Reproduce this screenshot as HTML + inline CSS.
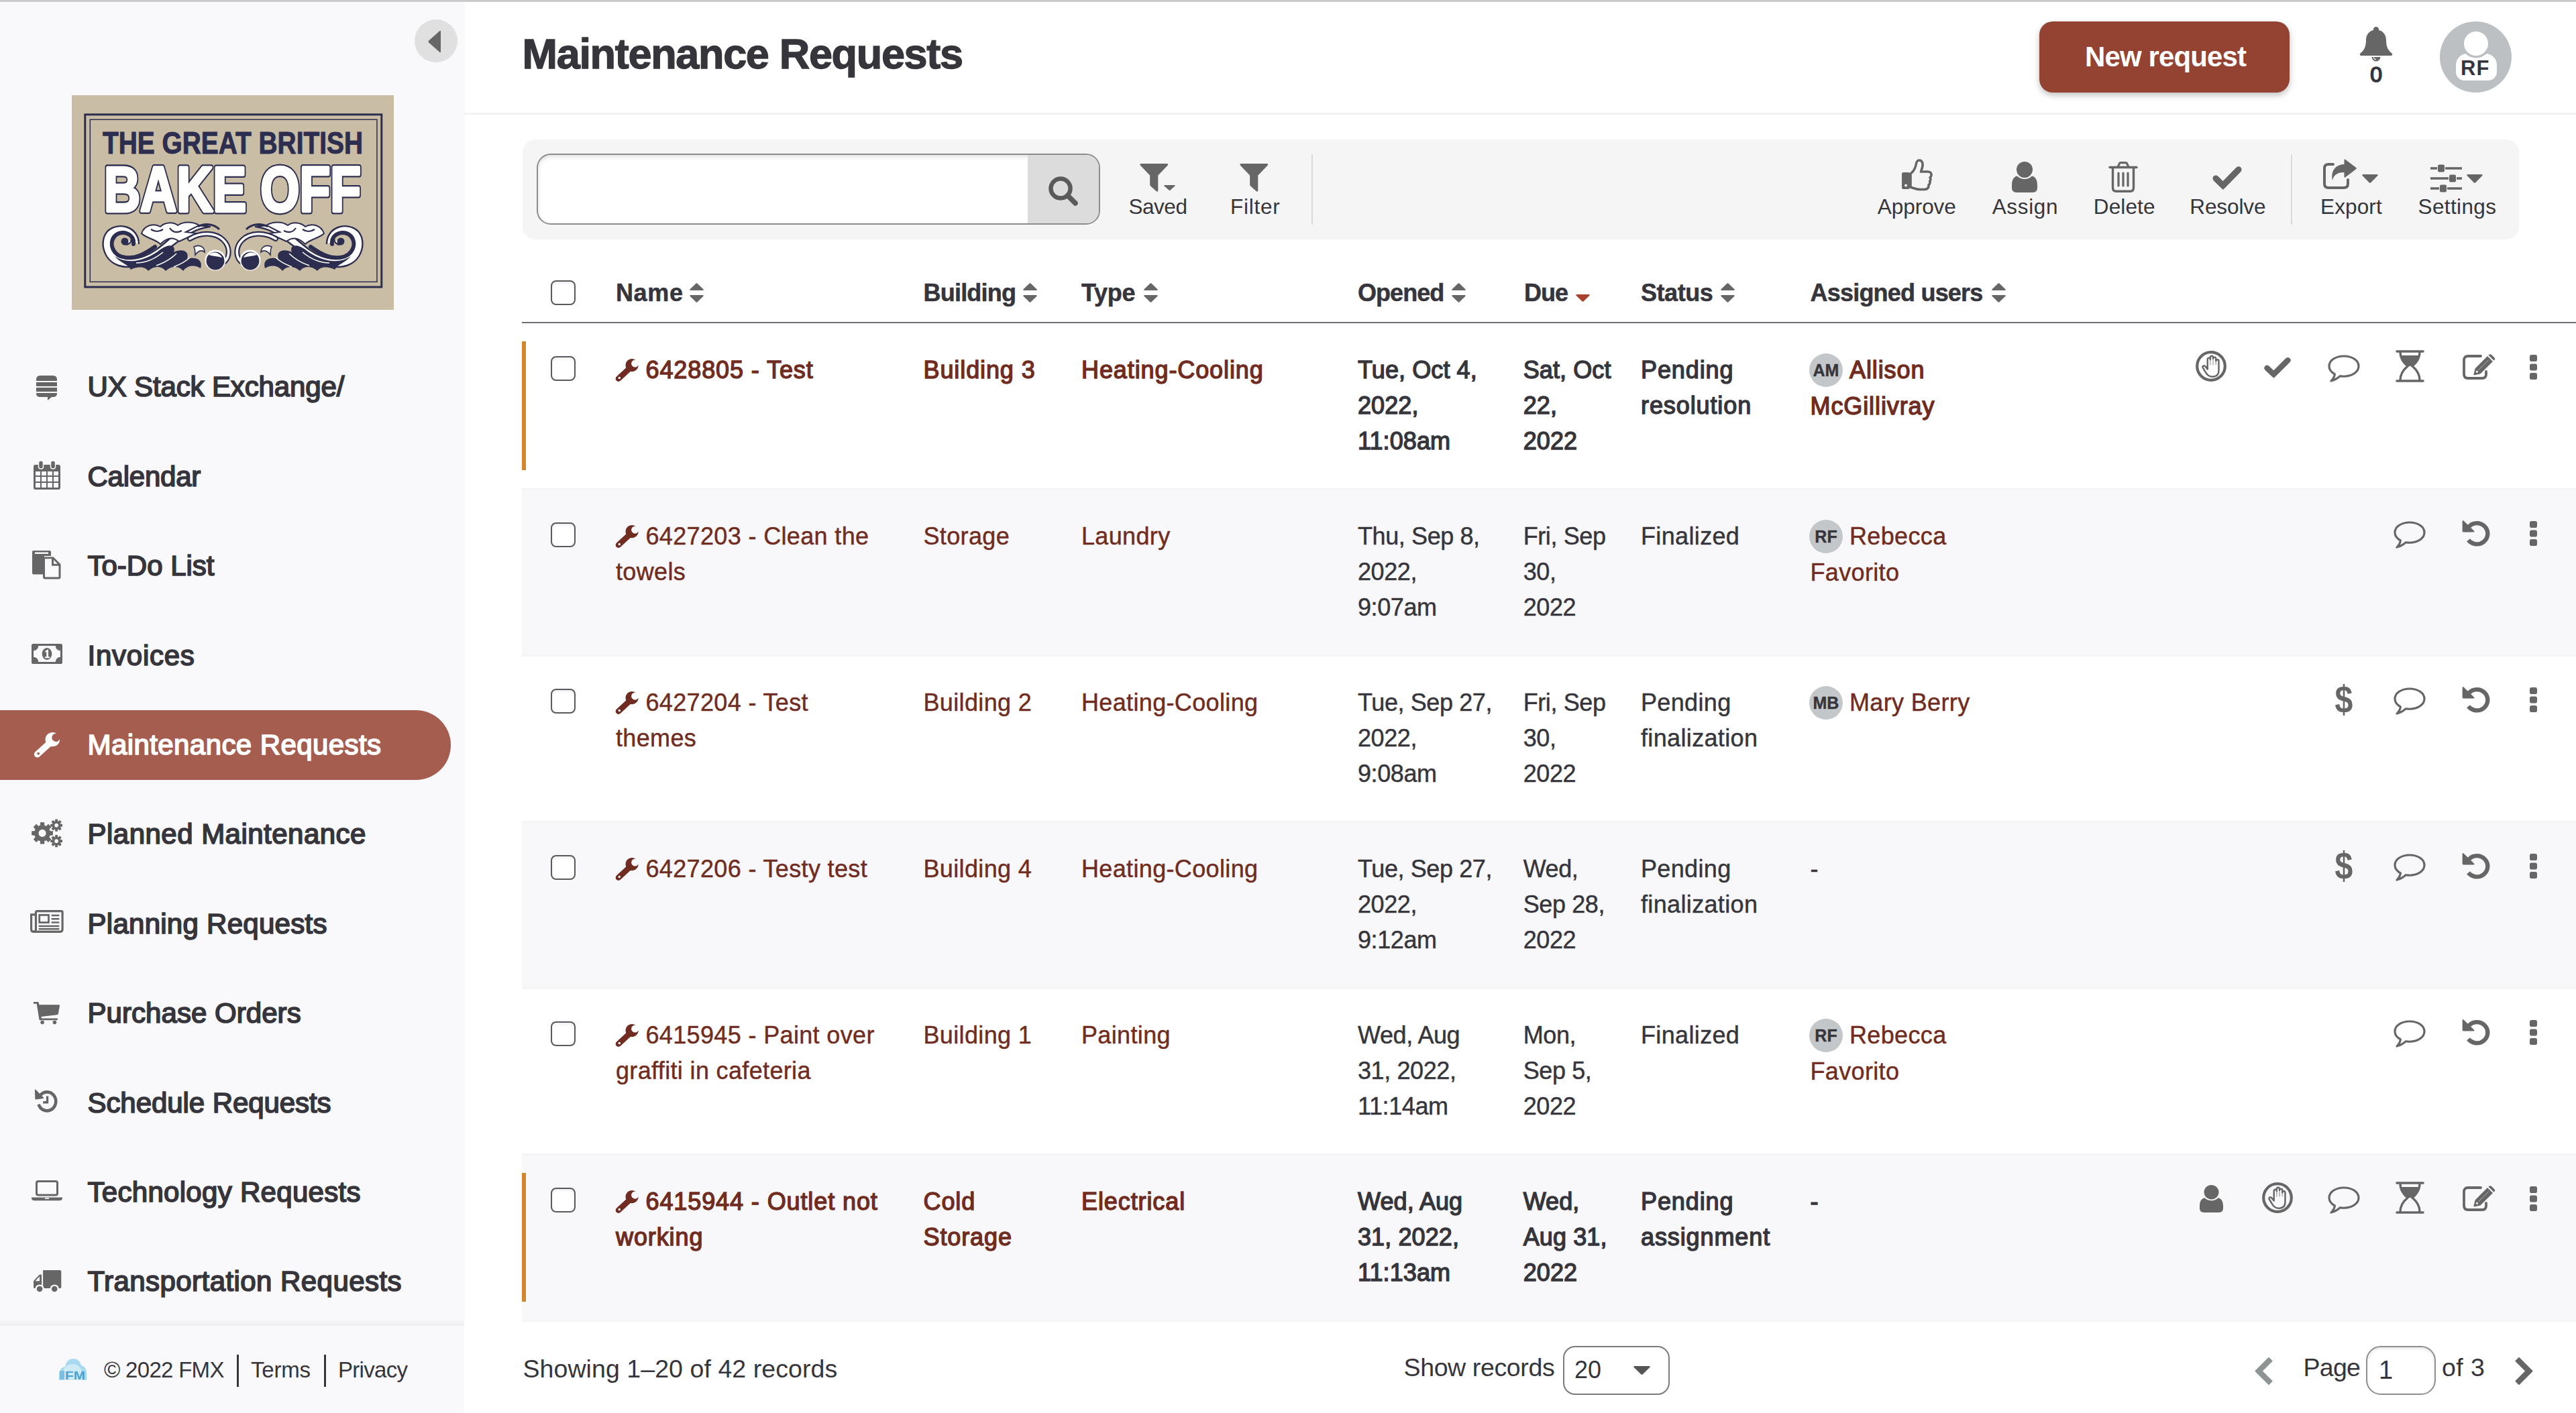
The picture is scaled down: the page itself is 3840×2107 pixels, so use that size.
<!DOCTYPE html>
<html lang="en"><head><meta charset="utf-8"><title>Maintenance Requests</title>
<style>
*{box-sizing:border-box;margin:0;padding:0}
html,body{width:3840px;height:2107px;overflow:hidden;background:#fff}
body{font-family:"Liberation Sans",sans-serif;color:#35353b;position:relative}
#app{position:absolute;left:0;top:0;width:3840px;height:2107px;overflow:hidden;transform-origin:0 0;background:#fff}
.abs,.ic,.t{position:absolute}
.ic{display:block;overflow:visible}
.t{white-space:nowrap;line-height:1}
.med{-webkit-text-stroke:0.9px currentColor}
#sidebar{position:absolute;left:0;top:0;width:693px;height:2107px;background:#f9f9fb}
.nav{font-size:42px;-webkit-text-stroke:1.7px currentColor}
.th{font-size:38px;font-weight:700;letter-spacing:-1.4px}
.cell{position:absolute;font-size:36px;line-height:53px;white-space:nowrap;letter-spacing:0.35px;-webkit-text-stroke:0.45px currentColor}
.dt{letter-spacing:-0.4px}
.link{color:#702c20}
.un{-webkit-text-stroke:1.4px currentColor;letter-spacing:0.9px}
.un.dt{letter-spacing:0.1px}
.tb{font-size:33px;letter-spacing:-0.5px}
.row{position:absolute;left:778px;width:3062px;height:248px}
.alt{background:#f8f8fa}
.bar{position:absolute;left:0;top:29px;width:6px;height:192px;background:#d4862b}
.cb{position:absolute;width:37px;height:37px;border:2.5px solid #5a5a5e;border-radius:8px;background:#fff;box-shadow:inset 0 2px 4px rgba(0,0,0,.08)}
.av{display:inline-block;width:50px;height:50px;border-radius:50%;background:#c4c7ca;color:#35353b;font-size:25px;font-weight:700;text-align:center;line-height:50px;vertical-align:middle;margin-right:10px;margin-left:-1.5px;position:relative;top:-2px;letter-spacing:0;-webkit-text-stroke:0.4px currentColor}
</style></head>
<body>
<div id="app">
<div class="abs" style="left:0;top:0;width:3840px;height:2.5px;background:linear-gradient(#c4c4c4,#d4d4d4);z-index:50"></div>
<div id="sidebar">
<div class="abs" style="left:618px;top:29px;width:64px;height:64px;border-radius:50%;background:#e0e0e1"></div>
<svg class="ic" style="left:638.0px;top:44.5px;width:20.0px;height:34.0px;color:#666;" viewBox="0 0 20 34" preserveAspectRatio="none"><path d="M19 2 L19 32 Q19 34 17 32.6 L1 18.2 Q0 17 1 15.8 L17 1.4 Q19 0 19 2Z" fill="currentColor"/></svg>
<svg class="ic" style="left:106.5px;top:141.5px;width:480px;height:320px" viewBox="0 0 480 320">
<rect width="480" height="320" fill="#c9bda5"/>
<rect x="19.8" y="28.8" width="442" height="257.2" fill="none" stroke="#2d2e4f" stroke-width="3"/>
<rect x="27.3" y="36.3" width="427.6" height="242" fill="none" stroke="#2d2e4f" stroke-width="1.5"/>
<text x="46" y="87" font-family="Liberation Sans, sans-serif" font-weight="700" font-size="45.5" fill="#2d2e4f" stroke="#2d2e4f" stroke-width="1" textLength="388" lengthAdjust="spacingAndGlyphs">THE GREAT BRITISH</text>
<text x="48" y="173" font-family="Liberation Sans, sans-serif" font-weight="700" font-size="95" fill="#2d2e4f" stroke="#2d2e4f" stroke-width="9" stroke-linejoin="round" textLength="383" lengthAdjust="spacingAndGlyphs">BAKE OFF</text>
<text x="48" y="173" font-family="Liberation Sans, sans-serif" font-weight="700" font-size="95" fill="#fff" stroke="#fff" stroke-width="4.4" stroke-linejoin="round" textLength="383" lengthAdjust="spacingAndGlyphs">BAKE OFF</text>
<g><path d="M100 222 C100 196 70 188 54 202 C40 216 46 246 70 254 C96 262 120 246 140 232 C160 218 176 200 206 196 C190 192 170 196 156 206 C140 218 128 232 108 240 C88 248 66 244 60 226 C56 212 66 202 78 204 C90 206 92 218 84 222 C78 224 74 218 78 214" fill="#fff" stroke="#2d2e4f" stroke-width="2.4" stroke-linejoin="round"/><path d="M92 222 C94 206 74 200 64 210 C54 222 62 240 80 242 C96 244 110 236 124 226" fill="none" stroke="#2d2e4f" stroke-width="6" stroke-linecap="round"/><circle cx="79" cy="218" r="5.5" fill="#2d2e4f"/><path d="M104 206 C108 194 122 190 132 196 C138 190 150 188 158 194 C166 188 180 188 190 194 L170 204 L186 206 L160 218 C150 210 140 214 132 222 C124 214 112 214 104 206Z" fill="#fff" stroke="#2d2e4f" stroke-width="2"/><path d="M118 200 C124 204 130 204 136 200 M146 198 C150 204 156 206 164 202" fill="none" stroke="#2d2e4f" stroke-width="2.2"/><path d="M64 240 C84 254 112 246 132 230 C146 220 156 224 152 234 C164 228 176 232 172 244 C186 240 196 246 192 258 C182 252 172 254 166 262 C160 254 148 254 140 262 C134 254 122 254 114 262 C108 254 96 256 88 260 C84 252 72 250 64 240Z" fill="#2d2e4f"/><path d="M96 250 C110 250 124 244 136 234 M126 254 C138 250 148 244 156 236 M152 256 C162 252 170 248 176 242" fill="none" stroke="#fff" stroke-width="1.6"/><path d="M176 214 C192 204 214 204 226 216 C236 226 236 240 228 248" fill="none" stroke="#2d2e4f" stroke-width="8" stroke-linecap="round"/><path d="M176 214 C192 204 214 204 226 216 C236 226 236 240 228 248" fill="none" stroke="#fff" stroke-width="3.6" stroke-linecap="round"/><circle cx="214" cy="246" r="15.5" fill="#fff"/><circle cx="214" cy="247" r="13.5" fill="#2d2e4f"/><path d="M204 238 C210 232 220 234 224 242 C216 240 210 240 204 238Z" fill="#fff"/><path d="M182 226 C190 222 198 226 198 234 C194 230 188 232 184 238 C184 232 184 230 182 226Z" fill="#fff" stroke="#2d2e4f" stroke-width="1.6"/><path d="M188 196 C198 190 212 192 220 200" fill="none" stroke="#2d2e4f" stroke-width="3"/></g>
<g transform="translate(480,0) scale(-1,1)"><path d="M100 222 C100 196 70 188 54 202 C40 216 46 246 70 254 C96 262 120 246 140 232 C160 218 176 200 206 196 C190 192 170 196 156 206 C140 218 128 232 108 240 C88 248 66 244 60 226 C56 212 66 202 78 204 C90 206 92 218 84 222 C78 224 74 218 78 214" fill="#fff" stroke="#2d2e4f" stroke-width="2.4" stroke-linejoin="round"/><path d="M92 222 C94 206 74 200 64 210 C54 222 62 240 80 242 C96 244 110 236 124 226" fill="none" stroke="#2d2e4f" stroke-width="6" stroke-linecap="round"/><circle cx="79" cy="218" r="5.5" fill="#2d2e4f"/><path d="M104 206 C108 194 122 190 132 196 C138 190 150 188 158 194 C166 188 180 188 190 194 L170 204 L186 206 L160 218 C150 210 140 214 132 222 C124 214 112 214 104 206Z" fill="#fff" stroke="#2d2e4f" stroke-width="2"/><path d="M118 200 C124 204 130 204 136 200 M146 198 C150 204 156 206 164 202" fill="none" stroke="#2d2e4f" stroke-width="2.2"/><path d="M64 240 C84 254 112 246 132 230 C146 220 156 224 152 234 C164 228 176 232 172 244 C186 240 196 246 192 258 C182 252 172 254 166 262 C160 254 148 254 140 262 C134 254 122 254 114 262 C108 254 96 256 88 260 C84 252 72 250 64 240Z" fill="#2d2e4f"/><path d="M96 250 C110 250 124 244 136 234 M126 254 C138 250 148 244 156 236 M152 256 C162 252 170 248 176 242" fill="none" stroke="#fff" stroke-width="1.6"/><path d="M176 214 C192 204 214 204 226 216 C236 226 236 240 228 248" fill="none" stroke="#2d2e4f" stroke-width="8" stroke-linecap="round"/><path d="M176 214 C192 204 214 204 226 216 C236 226 236 240 228 248" fill="none" stroke="#fff" stroke-width="3.6" stroke-linecap="round"/><circle cx="214" cy="246" r="15.5" fill="#fff"/><circle cx="214" cy="247" r="13.5" fill="#2d2e4f"/><path d="M204 238 C210 232 220 234 224 242 C216 240 210 240 204 238Z" fill="#fff"/><path d="M182 226 C190 222 198 226 198 234 C194 230 188 232 184 238 C184 232 184 230 182 226Z" fill="#fff" stroke="#2d2e4f" stroke-width="1.6"/><path d="M188 196 C198 190 212 192 220 200" fill="none" stroke="#2d2e4f" stroke-width="3"/></g>
</svg>
<svg class="ic" style="left:54.0px;top:559.5px;width:31.0px;height:37.0px;color:#666;" viewBox="0 0 31 37" preserveAspectRatio="none"><path d="M0 8 V6 Q0 0 6 0 H25 Q31 0 31 6 V8Z" fill="currentColor"/>
<rect x="0" y="10" width="31" height="6" fill="currentColor"/>
<rect x="0" y="18" width="31" height="6" fill="currentColor"/>
<path d="M0 26 H31 V27 Q31 32 25 32 H23 L17 37 V32 H6 Q0 32 0 27Z" fill="currentColor"/></svg>
<div class="t nav" style="left:130.5px;top:556.4px;font-size:42px;color:#35353b;letter-spacing:-0.14px;">UX Stack Exchange/</div>
<svg class="ic" style="left:49.7px;top:687.3px;width:40.0px;height:43.0px;color:#666;" viewBox="0 0 40 43" preserveAspectRatio="none"><path d="M3 6 H37 Q40 6 40 9 V40 Q40 43 37 43 H3 Q0 43 0 40 V9 Q0 6 3 6Z" fill="currentColor"/>
<g fill="#f9f9fb">
<rect x="3" y="16" width="7" height="6"/><rect x="12" y="16" width="7" height="6"/><rect x="21" y="16" width="7" height="6"/><rect x="30" y="16" width="7" height="6"/>
<rect x="3" y="24" width="7" height="7"/><rect x="12" y="24" width="7" height="7"/><rect x="21" y="24" width="7" height="7"/><rect x="30" y="24" width="7" height="7"/>
<rect x="3" y="33" width="7" height="7"/><rect x="12" y="33" width="7" height="7"/><rect x="21" y="33" width="7" height="7"/><rect x="30" y="33" width="7" height="7"/>
</g>
<rect x="7.5" y="0" width="7" height="12" rx="3" fill="currentColor" stroke="#f9f9fb" stroke-width="1.5"/>
<rect x="25.5" y="0" width="7" height="12" rx="3" fill="currentColor" stroke="#f9f9fb" stroke-width="1.5"/></svg>
<div class="t nav" style="left:130.5px;top:689.8px;font-size:42px;color:#35353b;letter-spacing:-0.24px;">Calendar</div>
<svg class="ic" style="left:48.2px;top:820.5px;width:43.0px;height:42.5px;color:#666;" viewBox="0 0 43 43" preserveAspectRatio="none"><path d="M2 0 H26 Q28 0 28 2 V8 H18 V36 H2 Q0 36 0 34 V2 Q0 0 2 0Z" fill="currentColor"/>
<rect x="4" y="2.5" width="20" height="2.5" fill="#f9f9fb"/>
<path d="M19 11 H31 L41 21 V40 Q41 41.5 39.5 41.5 H19 Q17.5 41.5 17.5 40 V12.5 Q17.5 11 19 11Z" fill="#f9f9fb" stroke="currentColor" stroke-width="3"/>
<path d="M30.5 11.5 V21.5 H40.5" fill="none" stroke="currentColor" stroke-width="3"/></svg>
<div class="t nav" style="left:130.5px;top:823.2px;font-size:42px;color:#35353b;letter-spacing:-0.01px;">To-Do List</div>
<svg class="ic" style="left:46.8px;top:960.2px;width:46.0px;height:30.0px;color:#666;" viewBox="0 0 45 29" preserveAspectRatio="none"><rect x="1.5" y="1.5" width="42" height="26" rx="1" fill="none" stroke="currentColor" stroke-width="3"/>
<path d="M3 3 H10 A7 7 0 0 1 3 10Z M42 3 V10 A7 7 0 0 1 35 3Z M3 26 V19 A7 7 0 0 1 10 26Z M42 26 H35 A7 7 0 0 1 42 19Z" fill="currentColor"/>
<ellipse cx="22.5" cy="14.5" rx="7.2" ry="8.6" fill="currentColor"/>
<path d="M20 10.5 L23 8.5 H24.5 V18.5 H26.5 V20.5 H19.5 V18.5 H21.8 V11.6 L20 12.6Z" fill="#f9f9fb"/></svg>
<div class="t nav" style="left:130.5px;top:956.6px;font-size:42px;color:#35353b;letter-spacing:0.75px;">Invoices</div>
<div class="abs" style="left:-60px;top:1058.6px;width:732px;height:104px;border-radius:52px;background:#a55d50"></div>
<svg class="ic" style="left:50.3px;top:1091.6px;width:39.4px;height:38.0px;color:#fff;" viewBox="0 0 35 34.5" preserveAspectRatio="none"><path d="M30.6 1.7 A9.6 9.6 0 1 0 34.8 9.35 A5.5 5.5 0 1 1 30.6 1.7Z" fill="currentColor"/>
<path d="M2.08 26.64 L17.58 12.34 L23.42 18.66 L7.92 32.96 A4.3 4.3 0 0 1 2.08 26.64Z M8.1 28.7 A1.75 1.75 0 1 0 4.6 28.7 A1.75 1.75 0 1 0 8.1 28.7Z" fill="currentColor" fill-rule="evenodd"/></svg>
<div class="t nav" style="left:130.5px;top:1090.0px;font-size:42px;color:#fff;letter-spacing:0.42px;">Maintenance Requests</div>
<svg class="ic" style="left:46.7px;top:1222.0px;width:46.2px;height:40.8px;color:#666;" viewBox="0 0 46 40" preserveAspectRatio="none"><path d="M31.27 17.34 L31.27 22.66 L27.18 22.68 L25.81 26.01 L28.68 28.91 L24.91 32.68 L22.01 29.81 L18.68 31.18 L18.66 35.27 L13.34 35.27 L13.32 31.18 L9.99 29.81 L7.09 32.68 L3.32 28.91 L6.19 26.01 L4.82 22.68 L0.73 22.66 L0.73 17.34 L4.82 17.32 L6.19 13.99 L3.32 11.09 L7.09 7.32 L9.99 10.19 L13.32 8.82 L13.34 4.73 L18.66 4.73 L18.68 8.82 L22.01 10.19 L24.91 7.32 L28.68 11.09 L25.81 13.99 L27.18 17.32Z" fill="currentColor" stroke="currentColor" stroke-width="1" stroke-linejoin="round"/><circle cx="16" cy="20" r="5.5" fill="#f9f9fb"/><path d="M45.37 7.04 L45.37 9.96 L42.83 9.90 L42.12 11.63 L43.95 13.39 L41.89 15.45 L40.13 13.62 L38.40 14.33 L38.46 16.87 L35.54 16.87 L35.60 14.33 L33.87 13.62 L32.11 15.45 L30.05 13.39 L31.88 11.63 L31.17 9.90 L28.63 9.96 L28.63 7.04 L31.17 7.10 L31.88 5.37 L30.05 3.61 L32.11 1.55 L33.87 3.38 L35.60 2.67 L35.54 0.13 L38.46 0.13 L38.40 2.67 L40.13 3.38 L41.89 1.55 L43.95 3.61 L42.12 5.37 L42.83 7.10Z" fill="currentColor" stroke="currentColor" stroke-width="1" stroke-linejoin="round"/><circle cx="37" cy="8.5" r="2.8" fill="#f9f9fb"/><path d="M45.37 30.04 L45.37 32.96 L42.83 32.90 L42.12 34.63 L43.95 36.39 L41.89 38.45 L40.13 36.62 L38.40 37.33 L38.46 39.87 L35.54 39.87 L35.60 37.33 L33.87 36.62 L32.11 38.45 L30.05 36.39 L31.88 34.63 L31.17 32.90 L28.63 32.96 L28.63 30.04 L31.17 30.10 L31.88 28.37 L30.05 26.61 L32.11 24.55 L33.87 26.38 L35.60 25.67 L35.54 23.13 L38.46 23.13 L38.40 25.67 L40.13 26.38 L41.89 24.55 L43.95 26.61 L42.12 28.37 L42.83 30.10Z" fill="currentColor" stroke="currentColor" stroke-width="1" stroke-linejoin="round"/><circle cx="37" cy="31.5" r="2.8" fill="#f9f9fb"/></svg>
<div class="t nav" style="left:130.5px;top:1223.4px;font-size:42px;color:#35353b;letter-spacing:0.48px;">Planned Maintenance</div>
<svg class="ic" style="left:44.9px;top:1357.0px;width:49.7px;height:34.0px;color:#666;" viewBox="0 0 47 32" preserveAspectRatio="none"><path d="M8 1.5 H44 Q45.5 1.5 45.5 3 V27 Q45.5 30.5 42 30.5 H5 Q1.5 30.5 1.5 27 V6.5 H8" fill="none" stroke="currentColor" stroke-width="3"/>
<path d="M8 1.5 V27 Q8 30.5 5 30.5" fill="none" stroke="currentColor" stroke-width="3"/>
<rect x="13" y="7" width="13" height="10.5" fill="none" stroke="currentColor" stroke-width="2.6"/>
<path d="M30 7.5 H41 M30 12.5 H41 M30 17.5 H41 M12 22.5 H41 M12 26.5 H41" stroke="currentColor" stroke-width="2.4"/></svg>
<div class="t nav" style="left:130.5px;top:1356.8px;font-size:42px;color:#35353b;letter-spacing:0.27px;">Planning Requests</div>
<svg class="ic" style="left:50.3px;top:1493.5px;width:39.4px;height:33.4px;color:#666;" viewBox="0 0 42 36" preserveAspectRatio="none"><path d="M0 0 H6.5 Q8 0 8.4 1.6 L9 4.5 H40 Q42 4.5 41.6 6.5 L39.3 19 Q39 20.6 37.4 20.8 L12.2 23.6 L12.8 26.5 H37 Q38.5 26.5 38.5 28 Q38.5 29.5 37 29.5 H10.5 Q9.2 29.5 9 28.2 L5 3 H0Z" fill="currentColor"/>
<circle cx="14" cy="33" r="3" fill="currentColor"/><circle cx="33.5" cy="33" r="3" fill="currentColor"/></svg>
<div class="t nav" style="left:130.5px;top:1490.2px;font-size:42px;color:#35353b;letter-spacing:0.05px;">Purchase Orders</div>
<svg class="ic" style="left:51.1px;top:1624.2px;width:36.4px;height:36.7px;color:#666;" viewBox="0 0 40 38" preserveAspectRatio="none"><path d="M7.2 23.5 A14.5 14.5 0 1 0 10 9.5" fill="none" stroke="currentColor" stroke-width="5"/>
<path d="M1 2 L1.5 15 Q1.6 16.2 2.8 16 L15 14.5 Q16.5 14.2 15.4 13.1 L3 1.2 Q1 -0.5 1 2Z" fill="currentColor"/>
<path d="M21.5 11 V20.5 H14.5" fill="none" stroke="currentColor" stroke-width="3.6"/></svg>
<div class="t nav" style="left:130.5px;top:1623.6px;font-size:42px;color:#35353b;letter-spacing:-0.07px;">Schedule Requests</div>
<svg class="ic" style="left:47.0px;top:1760.3px;width:46.0px;height:30.7px;color:#666;" viewBox="0 0 46 30" preserveAspectRatio="none"><rect x="7.5" y="1.5" width="31" height="20" rx="2.5" fill="none" stroke="currentColor" stroke-width="3"/>
<path d="M0 25 H46 V26 Q46 29.5 42 29.5 H4 Q0 29.5 0 26Z" fill="currentColor"/>
<rect x="20" y="25.6" width="6" height="1.6" fill="#f9f9fb"/></svg>
<div class="t nav" style="left:130.5px;top:1757.0px;font-size:42px;color:#35353b;letter-spacing:0.30px;">Technology Requests</div>
<svg class="ic" style="left:49.8px;top:1893.5px;width:41.3px;height:33.4px;color:#666;" viewBox="0 0 41 34" preserveAspectRatio="none"><path d="M14 0 H39 Q41 0 41 2 V26 Q41 27.5 39.5 27.5 H14Z" fill="currentColor"/>
<path d="M12 6.5 V27.5 H1.5 Q0 27.5 0 26 V17.5 Q0 16.5 0.8 15.6 L8 7.6 Q9 6.5 10 6.5Z M3 16.5 H9 V9.6 H8.8 L3 16Z" fill="currentColor" fill-rule="evenodd"/>
<circle cx="9" cy="28.5" r="5.5" fill="currentColor" stroke="#f9f9fb" stroke-width="2.4"/>
<circle cx="31" cy="28.5" r="5.5" fill="currentColor" stroke="#f9f9fb" stroke-width="2.4"/></svg>
<div class="t nav" style="left:130.5px;top:1890.4px;font-size:42px;color:#35353b;letter-spacing:0.44px;">Transportation Requests</div>
<div class="abs" style="left:0;top:1966px;width:693px;height:11px;background:linear-gradient(rgba(0,0,0,0),rgba(0,0,0,.045))"></div>
<div class="abs" style="left:0;top:1977px;width:693px;height:130px;background:#f9f9fb"></div>
<svg class="ic" style="left:85.5px;top:2024.5px;width:44px;height:34px" viewBox="0 0 44 34">
<path d="M2 33 V24 C2 18 6 14 11 13 C12 6 17 1 23 1 C29 1 34 5 35 11 C40 12 43 17 43 22 V33Z" fill="#a9d9f0"/>
<path d="M8 33 V22 C8 15 14 9 22 9 C30 9 36 15 36 22 V33Z" fill="#cfeaf7"/>
<rect x="3" y="19" width="7" height="13" fill="#7cc0e6"/>
<text x="11" y="32" font-family="Liberation Sans, sans-serif" font-weight="700" font-size="17" fill="#4aa3d6" textLength="30" lengthAdjust="spacingAndGlyphs">FM</text>
</svg>
<div class="t " style="left:155px;top:2026.1px;font-size:33px;color:#35353b;letter-spacing:-0.7px;">© 2022 FMX</div>
<div class="abs" style="left:353px;top:2020px;width:3px;height:48px;background:#35353b"></div>
<div class="t " style="left:374px;top:2026.1px;font-size:33px;color:#35353b;letter-spacing:-0.2px;">Terms</div>
<div class="abs" style="left:483px;top:2020px;width:3px;height:48px;background:#35353b"></div>
<div class="t " style="left:504px;top:2026.1px;font-size:33px;color:#35353b;letter-spacing:-0.7px;">Privacy</div>
</div>
<div class="abs" style="left:692px;top:168px;width:3148px;height:2.5px;background:#f2f2f3"></div>
<div class="t " style="left:778.6px;top:48.7px;font-size:63px;color:#35353b;font-weight:700;letter-spacing:-1.33px;-webkit-text-stroke:1.3px currentColor;">Maintenance Requests</div>
<div class="abs" style="left:3040px;top:32px;width:373px;height:106px;border-radius:20px;background:#944332;box-shadow:0 4px 10px rgba(0,0,0,.25)"></div>
<div class="t " style="left:3108px;top:64.4px;font-size:42px;color:#fff;font-weight:700;letter-spacing:-0.88px;">New request</div>
<svg class="ic" style="left:3516.5px;top:39.5px;width:50.0px;height:52.0px;color:#666;" viewBox="0 0 50 52" preserveAspectRatio="none"><path d="M25 0 C27.4 0 29 1.6 29 3.6 V5 C36.5 6.8 40 13 40 20 C40 29 42.5 35 48.5 39.5 Q50 41 48.5 42.5 Q47.8 43 47 43 H3 Q2.2 43 1.5 42.5 Q0 41 1.5 39.5 C7.5 35 10 29 10 20 C10 13 13.5 6.8 21 5 V3.6 C21 1.6 22.6 0 25 0Z" fill="currentColor"/>
<path d="M18.5 45 A6.5 6.5 0 0 0 31.5 45Z" fill="currentColor"/>
<path d="M21.5 45.3 A3.6 3.6 0 0 0 25 48.7" fill="none" stroke="#fff" stroke-width="1.2"/></svg>
<div class="t " style="left:3533.3px;top:95.2px;font-size:32px;color:#35353b;-webkit-text-stroke:1.6px currentColor;">0</div>
<div class="abs" style="left:3637px;top:32px;width:107px;height:106px;border-radius:50%;background:#bcc0c3;overflow:hidden"><div class="abs" style="left:24px;top:48px;width:60.5px;height:40px;border-radius:17px 17px 13px 13px;background:#fff"></div><div class="abs" style="left:35.5px;top:14.5px;width:36.5px;height:36.5px;border-radius:50%;background:#fff;box-shadow:0 0 0 3.5px #bcc0c3"></div></div>
<div class="t " style="left:3668px;top:85.8px;font-size:31px;color:#35353b;font-weight:700;letter-spacing:1px;">RF</div>
<div class="abs" style="left:779px;top:208px;width:2976px;height:149px;border-radius:19px;background:#f5f5f5"></div>
<div class="abs" style="left:800px;top:229px;width:840px;height:106px;border-radius:21px;border:2.5px solid #8c8c8c;background:#fff;overflow:hidden;box-shadow:inset 0 3px 6px rgba(0,0,0,.12)"><div class="abs" style="left:730px;top:0;width:110px;height:106px;background:#dcdcdc"></div></div>
<svg class="ic" style="left:1563.0px;top:262.5px;width:44.0px;height:44.0px;color:#5a5a5a;" viewBox="0 0 44 44" preserveAspectRatio="none"><circle cx="18" cy="18" r="14.5" fill="none" stroke="currentColor" stroke-width="6.5"/>
<path d="M28.5 28.5 L40 40" stroke="currentColor" stroke-width="7.5" stroke-linecap="round"/></svg>
<svg class="ic" style="left:1699.0px;top:244.3px;width:42.5px;height:42.0px;color:#666;" viewBox="0 0 42 42" preserveAspectRatio="none"><path d="M2 0 H40 Q42.6 0.2 41 2.8 L27 17.5 V40 Q26.8 42.6 24.6 41.2 L16 33.4 Q15 32.6 15 31.4 V17.5 L1 2.8 Q-0.6 0.2 2 0Z" fill="currentColor"/></svg>
<svg class="ic" style="left:1735.0px;top:275.5px;width:17.0px;height:8.0px;color:#666;" viewBox="0 0 24 13" preserveAspectRatio="none"><path d="M1.5 0 H22.5 Q24.5 0.3 23.3 2 L13 12.4 Q12 13.3 11 12.4 L0.7 2 Q-0.5 0.3 1.5 0Z" fill="currentColor"/></svg>
<div class="t " style="left:1682.6px;top:293.3px;font-size:31.5px;color:#35353b;letter-spacing:-0.50px;">Saved</div>
<svg class="ic" style="left:1848.0px;top:244.3px;width:42.5px;height:42.0px;color:#666;" viewBox="0 0 42 42" preserveAspectRatio="none"><path d="M2 0 H40 Q42.6 0.2 41 2.8 L27 17.5 V40 Q26.8 42.6 24.6 41.2 L16 33.4 Q15 32.6 15 31.4 V17.5 L1 2.8 Q-0.6 0.2 2 0Z" fill="currentColor"/></svg>
<div class="t " style="left:1834px;top:293.3px;font-size:31.5px;color:#35353b;letter-spacing:0.74px;">Filter</div>
<div class="abs" style="left:1955px;top:230px;width:2px;height:105px;background:#dadada"></div>
<svg class="ic" style="left:2833.5px;top:237.0px;width:47.0px;height:48.0px;color:#666;" viewBox="0 0 47 48" preserveAspectRatio="none"><path d="M14 22 C18 19 21 14 22 9 C22.6 5 24 2 27 2 C31 2 32.5 6 32 10 C31.7 13 30.6 16 29.5 19 H40 C43.5 19 45.5 21.5 45 24.5 C44.8 26 44 27 43 27.8 C44.2 29.2 44.4 31.6 42.6 33.4 C43.4 35 43 37.4 41 38.8 C41.6 42.6 39 45.5 35 45.5 H29 C24 45.5 19 44 14 42Z" fill="none" stroke="currentColor" stroke-width="3.6" stroke-linejoin="round"/>
<rect x="1" y="20" width="12" height="25" rx="2.5" fill="currentColor"/>
<circle cx="7" cy="39.5" r="2" fill="#f5f5f5"/></svg>
<div class="t " style="left:2798.8px;top:293.3px;font-size:31.5px;color:#35353b;letter-spacing:-0.05px;">Approve</div>
<svg class="ic" style="left:2999.0px;top:240.5px;width:38.0px;height:46.0px;color:#666;" viewBox="0 0 38 46" preserveAspectRatio="none"><circle cx="19" cy="12" r="12" fill="currentColor"/>
<path d="M8 21.5 C11 24.5 15 26 19 26 C23 26 27 24.5 30 21.5 C35.5 22.5 38 28 38 35 V39 Q38 46 31 46 H7 Q0 46 0 39 V35 C0 28 2.5 22.5 8 21.5Z" fill="currentColor"/></svg>
<div class="t " style="left:2969.7px;top:293.3px;font-size:31.5px;color:#35353b;letter-spacing:0.65px;">Assign</div>
<svg class="ic" style="left:3144.0px;top:240.5px;width:42.0px;height:46.0px;color:#666;" viewBox="0 0 42 46" preserveAspectRatio="none"><path d="M1 8.5 H41" stroke="currentColor" stroke-width="3.4" stroke-linecap="round"/>
<path d="M13 8 L15.5 2.6 Q16 1.7 17 1.7 H25 Q26 1.7 26.5 2.6 L29 8" fill="none" stroke="currentColor" stroke-width="3.2" stroke-linejoin="round"/>
<path d="M5.5 9 V39 Q5.5 44.3 10.5 44.3 H31.5 Q36.5 44.3 36.5 39 V9" fill="none" stroke="currentColor" stroke-width="3.4"/>
<path d="M14 17 V36 M21 17 V36 M28 17 V36" stroke="currentColor" stroke-width="3.2" stroke-linecap="round"/></svg>
<div class="t " style="left:3120.8px;top:293.3px;font-size:31.5px;color:#35353b;letter-spacing:0.11px;">Delete</div>
<svg class="ic" style="left:3296.5px;top:247.0px;width:46.0px;height:35.0px;color:#666;" viewBox="0 0 46 35" preserveAspectRatio="none"><path d="M6 19 L16.8 29.6 L40 5.8" fill="none" stroke="currentColor" stroke-width="9" stroke-linejoin="round" stroke-linecap="round"/><path d="M6 19 L16.8 29.6 L40 5.8" fill="none" stroke="currentColor" stroke-width="9" stroke-linejoin="miter"/></svg>
<div class="t " style="left:3264.3px;top:293.3px;font-size:31.5px;color:#35353b;letter-spacing:-0.10px;">Resolve</div>
<div class="abs" style="left:3415px;top:230px;width:2px;height:105px;background:#dadada"></div>
<svg class="ic" style="left:3463.0px;top:236.5px;width:50.0px;height:45.0px;color:#666;" viewBox="0 0 50 45" preserveAspectRatio="none"><path d="M37 31 V37 Q37 43 31 43 H8 Q2 43 2 37 V14 Q2 8 8 8 H15" fill="none" stroke="currentColor" stroke-width="4" stroke-linecap="round"/>
<path d="M33 0.8 L49.3 13 Q50.3 14 49.3 15 L33 27.5 Q31.5 28.3 31.5 26.5 V20 C22 20 16 23 14 32 C11 20 17 8.5 31.5 8 V1.8 Q31.5 0 33 0.8Z" fill="currentColor"/></svg>
<svg class="ic" style="left:3520.5px;top:260.0px;width:24.0px;height:13.0px;color:#666;" viewBox="0 0 24 13" preserveAspectRatio="none"><path d="M1.5 0 H22.5 Q24.5 0.3 23.3 2 L13 12.4 Q12 13.3 11 12.4 L0.7 2 Q-0.5 0.3 1.5 0Z" fill="currentColor"/></svg>
<div class="t " style="left:3459px;top:293.3px;font-size:31.5px;color:#35353b;letter-spacing:0.14px;">Export</div>
<svg class="ic" style="left:3622.5px;top:244.5px;width:47.0px;height:42.0px;color:#666;" viewBox="0 0 47 42" preserveAspectRatio="none"><path d="M0 6 H10 M22 6 H47 M0 21 H27 M39 21 H47 M0 36 H13 M25 36 H47" stroke="currentColor" stroke-width="3.4"/>
<rect x="11" y="0.5" width="10" height="11" rx="2" fill="currentColor"/>
<rect x="28" y="15.5" width="10" height="11" rx="2" fill="currentColor"/>
<rect x="14" y="30.5" width="10" height="11" rx="2" fill="currentColor"/></svg>
<svg class="ic" style="left:3677.0px;top:260.0px;width:24.0px;height:13.0px;color:#666;" viewBox="0 0 24 13" preserveAspectRatio="none"><path d="M1.5 0 H22.5 Q24.5 0.3 23.3 2 L13 12.4 Q12 13.3 11 12.4 L0.7 2 Q-0.5 0.3 1.5 0Z" fill="currentColor"/></svg>
<div class="t " style="left:3604.6px;top:293.3px;font-size:31.5px;color:#35353b;letter-spacing:0.36px;">Settings</div>
<div class="cb" style="left:821px;top:418px"></div>
<div class="t " style="left:918px;top:418.5px;font-size:36px;color:#35353b;font-weight:700;letter-spacing:0.62px;-webkit-text-stroke:0.5px currentColor;">Name</div>
<svg class="ic" style="left:1028.4px;top:422.0px;width:21.0px;height:11.0px;color:#666;" viewBox="0 0 24 13" preserveAspectRatio="none"><path d="M1.5 13 H22.5 Q24.5 12.7 23.3 11 L13 0.6 Q12 -0.3 11 0.6 L0.7 11 Q-0.5 12.7 1.5 13Z" fill="currentColor"/></svg>
<svg class="ic" style="left:1028.4px;top:440.0px;width:21.0px;height:11.0px;color:#666;" viewBox="0 0 24 13" preserveAspectRatio="none"><path d="M1.5 0 H22.5 Q24.5 0.3 23.3 2 L13 12.4 Q12 13.3 11 12.4 L0.7 2 Q-0.5 0.3 1.5 0Z" fill="currentColor"/></svg>
<div class="t " style="left:1376.5px;top:418.5px;font-size:36px;color:#35353b;font-weight:700;letter-spacing:-0.78px;-webkit-text-stroke:0.5px currentColor;">Building</div>
<svg class="ic" style="left:1524.5px;top:422.0px;width:21.0px;height:11.0px;color:#666;" viewBox="0 0 24 13" preserveAspectRatio="none"><path d="M1.5 13 H22.5 Q24.5 12.7 23.3 11 L13 0.6 Q12 -0.3 11 0.6 L0.7 11 Q-0.5 12.7 1.5 13Z" fill="currentColor"/></svg>
<svg class="ic" style="left:1524.5px;top:440.0px;width:21.0px;height:11.0px;color:#666;" viewBox="0 0 24 13" preserveAspectRatio="none"><path d="M1.5 0 H22.5 Q24.5 0.3 23.3 2 L13 12.4 Q12 13.3 11 12.4 L0.7 2 Q-0.5 0.3 1.5 0Z" fill="currentColor"/></svg>
<div class="t " style="left:1612px;top:418.5px;font-size:36px;color:#35353b;font-weight:700;letter-spacing:-0.28px;-webkit-text-stroke:0.5px currentColor;">Type</div>
<svg class="ic" style="left:1705.0px;top:422.0px;width:21.0px;height:11.0px;color:#666;" viewBox="0 0 24 13" preserveAspectRatio="none"><path d="M1.5 13 H22.5 Q24.5 12.7 23.3 11 L13 0.6 Q12 -0.3 11 0.6 L0.7 11 Q-0.5 12.7 1.5 13Z" fill="currentColor"/></svg>
<svg class="ic" style="left:1705.0px;top:440.0px;width:21.0px;height:11.0px;color:#666;" viewBox="0 0 24 13" preserveAspectRatio="none"><path d="M1.5 0 H22.5 Q24.5 0.3 23.3 2 L13 12.4 Q12 13.3 11 12.4 L0.7 2 Q-0.5 0.3 1.5 0Z" fill="currentColor"/></svg>
<div class="t " style="left:2024px;top:418.5px;font-size:36px;color:#35353b;font-weight:700;letter-spacing:-0.95px;-webkit-text-stroke:0.5px currentColor;">Opened</div>
<svg class="ic" style="left:2163.8px;top:422.0px;width:21.0px;height:11.0px;color:#666;" viewBox="0 0 24 13" preserveAspectRatio="none"><path d="M1.5 13 H22.5 Q24.5 12.7 23.3 11 L13 0.6 Q12 -0.3 11 0.6 L0.7 11 Q-0.5 12.7 1.5 13Z" fill="currentColor"/></svg>
<svg class="ic" style="left:2163.8px;top:440.0px;width:21.0px;height:11.0px;color:#666;" viewBox="0 0 24 13" preserveAspectRatio="none"><path d="M1.5 0 H22.5 Q24.5 0.3 23.3 2 L13 12.4 Q12 13.3 11 12.4 L0.7 2 Q-0.5 0.3 1.5 0Z" fill="currentColor"/></svg>
<div class="t " style="left:2272px;top:418.5px;font-size:36px;color:#35353b;font-weight:700;letter-spacing:-0.94px;-webkit-text-stroke:0.5px currentColor;">Due</div>
<svg class="ic" style="left:2348.6px;top:439.0px;width:21.0px;height:11.0px;color:#a8402d;" viewBox="0 0 24 13" preserveAspectRatio="none"><path d="M1.5 0 H22.5 Q24.5 0.3 23.3 2 L13 12.4 Q12 13.3 11 12.4 L0.7 2 Q-0.5 0.3 1.5 0Z" fill="currentColor"/></svg>
<div class="t " style="left:2446px;top:418.5px;font-size:36px;color:#35353b;font-weight:700;letter-spacing:-0.46px;-webkit-text-stroke:0.5px currentColor;">Status</div>
<svg class="ic" style="left:2565.2px;top:422.0px;width:21.0px;height:11.0px;color:#666;" viewBox="0 0 24 13" preserveAspectRatio="none"><path d="M1.5 13 H22.5 Q24.5 12.7 23.3 11 L13 0.6 Q12 -0.3 11 0.6 L0.7 11 Q-0.5 12.7 1.5 13Z" fill="currentColor"/></svg>
<svg class="ic" style="left:2565.2px;top:440.0px;width:21.0px;height:11.0px;color:#666;" viewBox="0 0 24 13" preserveAspectRatio="none"><path d="M1.5 0 H22.5 Q24.5 0.3 23.3 2 L13 12.4 Q12 13.3 11 12.4 L0.7 2 Q-0.5 0.3 1.5 0Z" fill="currentColor"/></svg>
<div class="t " style="left:2698.5px;top:418.5px;font-size:36px;color:#35353b;font-weight:700;letter-spacing:-0.79px;-webkit-text-stroke:0.5px currentColor;">Assigned users</div>
<svg class="ic" style="left:2968.8px;top:422.0px;width:21.0px;height:11.0px;color:#666;" viewBox="0 0 24 13" preserveAspectRatio="none"><path d="M1.5 13 H22.5 Q24.5 12.7 23.3 11 L13 0.6 Q12 -0.3 11 0.6 L0.7 11 Q-0.5 12.7 1.5 13Z" fill="currentColor"/></svg>
<svg class="ic" style="left:2968.8px;top:440.0px;width:21.0px;height:11.0px;color:#666;" viewBox="0 0 24 13" preserveAspectRatio="none"><path d="M1.5 0 H22.5 Q24.5 0.3 23.3 2 L13 12.4 Q12 13.3 11 12.4 L0.7 2 Q-0.5 0.3 1.5 0Z" fill="currentColor"/></svg>
<div class="abs" style="left:778px;top:480px;width:3062px;height:2.2px;background:#707074;z-index:5"></div>
<div class="row" style="top:480.0px">
<div class="bar"></div>
<div class="cb" style="left:43px;top:50.5px"></div>
<svg class="ic" style="left:138.9px;top:54.8px;width:34.8px;height:34.4px;color:#702c20;" viewBox="0 0 35 34.5" preserveAspectRatio="none"><path d="M30.6 1.7 A9.6 9.6 0 1 0 34.8 9.35 A5.5 5.5 0 1 1 30.6 1.7Z" fill="currentColor"/>
<path d="M2.08 26.64 L17.58 12.34 L23.42 18.66 L7.92 32.96 A4.3 4.3 0 0 1 2.08 26.64Z M8.1 28.7 A1.75 1.75 0 1 0 4.6 28.7 A1.75 1.75 0 1 0 8.1 28.7Z" fill="currentColor" fill-rule="evenodd"/></svg>
<div class="cell link un" style="left:140px;top:44.7px"><span style="display:inline-block;width:44.5px"></span>6428805 - Test</div>
<div class="cell link un" style="left:598.5px;top:44.7px">Building 3</div>
<div class="cell link un" style="left:834px;top:44.7px">Heating-Cooling</div>
<div class="cell dt un" style="left:1246px;top:44.7px">Tue, Oct 4,<br>2022,<br>11:08am</div>
<div class="cell dt un" style="left:1492.6999999999998px;top:44.7px">Sat, Oct<br>22,<br>2022</div>
<div class="cell un" style="left:1668px;top:44.7px">Pending<br>resolution</div>
<div class="cell link un" style="left:1920.5px;top:44.7px"><span class="av">AM</span>Allison<br>McGillivray</div>
<svg class="ic" style="left:2993.0px;top:49.0px;width:11.0px;height:37.0px;color:#666;" viewBox="0 0 11 37" preserveAspectRatio="none"><rect x="0" y="0" width="11" height="10" rx="2.8" fill="currentColor"/><rect x="0" y="13.5" width="11" height="10" rx="2.8" fill="currentColor"/><rect x="0" y="27" width="11" height="10" rx="2.8" fill="currentColor"/></svg>
<svg class="ic" style="left:2892.5px;top:48.0px;width:49.0px;height:38.0px;color:#666;" viewBox="0 0 49 38" preserveAspectRatio="none"><path d="M27 3 H8 Q2 3 2 9 V30 Q2 36 8 36 H29 Q35 36 35 30 V26" fill="none" stroke="currentColor" stroke-width="3.8" stroke-linecap="round"/>
<path d="M16.5 30 L18.6 21.4 L37 3 L45 11 L26.4 29.4 L17.8 31.3 Q16.2 31.6 16.5 30Z M19.6 26 L20.4 27.6 L22.2 28 L23.2 26.6 L21.4 24.6Z" fill="currentColor" fill-rule="evenodd"/>
<path d="M38.4 1.6 L40 0.6 Q41.5 -0.4 43 0.9 L47.6 5.4 Q48.9 6.8 47.8 8.4 L46.4 9.6Z" fill="currentColor"/>
<path d="M23.4 24 L39 8.4" stroke="#fff" stroke-width="1" opacity=".5"/></svg>
<svg class="ic" style="left:2793.5px;top:42.0px;width:41.0px;height:48.0px;color:#666;" viewBox="0 0 41 48" preserveAspectRatio="none"><path d="M1 2 H40 M1 46 H40" stroke="currentColor" stroke-width="3.6" stroke-linecap="round"/>
<path d="M6 3 C6 13 11 19 17 24 C11 29 6 35 6 45 M35 3 C35 13 30 19 24 24 C30 29 35 35 35 45" fill="none" stroke="currentColor" stroke-width="3.4"/>
<path d="M7.3 8 H33.7 C32.6 14.5 28.5 19.5 23.5 23 Q20.5 25 17.5 23 C12.5 19.5 8.4 14.5 7.3 8Z" fill="currentColor"/></svg>
<svg class="ic" style="left:2691.5px;top:49.0px;width:48.0px;height:41.0px;color:#666;" viewBox="0 0 48 42" preserveAspectRatio="none"><path d="M24 2 C36.5 2 46 8.8 46 17.5 C46 26.2 36.5 33 24 33 C22 33 20.2 32.8 18.4 32.5 C15 35.8 10.5 38.6 5 40 C8 37 10 33.5 10.4 29.6 C5.2 26.8 2 22.4 2 17.5 C2 8.8 11.5 2 24 2Z" fill="none" stroke="currentColor" stroke-width="3.2" stroke-linejoin="round"/></svg>
<svg class="ic" style="left:2596.0px;top:52.0px;width:42.0px;height:31.0px;color:#666;" viewBox="0 0 46 35" preserveAspectRatio="none"><path d="M6 19 L16.8 29.6 L40 5.8" fill="none" stroke="currentColor" stroke-width="9" stroke-linejoin="round" stroke-linecap="round"/><path d="M6 19 L16.8 29.6 L40 5.8" fill="none" stroke="currentColor" stroke-width="9" stroke-linejoin="miter"/></svg>
<svg class="ic" style="left:2495.0px;top:42.5px;width:46.0px;height:46.0px;color:#666;" viewBox="0 0 46 46" preserveAspectRatio="none"><circle cx="23" cy="23" r="20.8" fill="none" stroke="currentColor" stroke-width="4.2"/>
<g transform="translate(23 23.5) scale(1.17) translate(-22 -23)">
<path d="M17.5 24 V14 Q17.5 12 19.3 12 Q21 12 21 14 V11.5 Q21 9.5 22.8 9.5 Q24.6 9.5 24.6 11.5 V13 Q24.6 11.2 26.4 11.2 Q28.2 11.2 28.2 13 V16 Q28.2 14.2 30 14.2 Q31.8 14.2 31.8 16 V28 C31.8 33.5 28.5 36 24 36 C20 36 17.5 34.5 15.5 31 L11.6 24.6 Q10.8 23 12.2 22.2 Q13.6 21.6 14.8 23 L17.5 26.4Z" fill="none" stroke="currentColor" stroke-width="2.1" stroke-linejoin="round"/>
<path d="M21 14 V21 M24.6 13 V21 M28.2 16 V21" stroke="currentColor" stroke-width="1.5" opacity=".45"/>
</g></svg>
</div>
<div class="row alt" style="top:728.0px">
<div class="abs" style="left:0;top:0;width:3062px;height:3px;background:#f5f5f6"></div>
<div class="cb" style="left:43px;top:50.5px"></div>
<svg class="ic" style="left:138.9px;top:54.8px;width:34.8px;height:34.4px;color:#702c20;" viewBox="0 0 35 34.5" preserveAspectRatio="none"><path d="M30.6 1.7 A9.6 9.6 0 1 0 34.8 9.35 A5.5 5.5 0 1 1 30.6 1.7Z" fill="currentColor"/>
<path d="M2.08 26.64 L17.58 12.34 L23.42 18.66 L7.92 32.96 A4.3 4.3 0 0 1 2.08 26.64Z M8.1 28.7 A1.75 1.75 0 1 0 4.6 28.7 A1.75 1.75 0 1 0 8.1 28.7Z" fill="currentColor" fill-rule="evenodd"/></svg>
<div class="cell link" style="left:140px;top:44.7px"><span style="display:inline-block;width:44.5px"></span>6427203 - Clean the<br>towels</div>
<div class="cell link" style="left:598.5px;top:44.7px">Storage</div>
<div class="cell link" style="left:834px;top:44.7px">Laundry</div>
<div class="cell dt" style="left:1246px;top:44.7px">Thu, Sep 8,<br>2022,<br>9:07am</div>
<div class="cell dt" style="left:1492.6999999999998px;top:44.7px">Fri, Sep<br>30,<br>2022</div>
<div class="cell" style="left:1668px;top:44.7px">Finalized</div>
<div class="cell link" style="left:1920.5px;top:44.7px"><span class="av">RF</span>Rebecca<br>Favorito</div>
<svg class="ic" style="left:2993.0px;top:49.0px;width:11.0px;height:37.0px;color:#666;" viewBox="0 0 11 37" preserveAspectRatio="none"><rect x="0" y="0" width="11" height="10" rx="2.8" fill="currentColor"/><rect x="0" y="13.5" width="11" height="10" rx="2.8" fill="currentColor"/><rect x="0" y="27" width="11" height="10" rx="2.8" fill="currentColor"/></svg>
<svg class="ic" style="left:2892.0px;top:46.8px;width:42.0px;height:41.0px;color:#666;" viewBox="0 0 42 42" preserveAspectRatio="none"><path d="M9.6 31 A16 16 0 1 0 10.5 10.5" fill="none" stroke="currentColor" stroke-width="6.4"/>
<path d="M0.6 2.6 V17.5 Q0.6 19 2.1 19 H17 Q19.6 18.8 17.9 16.9 L2.7 1.7 Q0.8 0 0.6 2.6Z" fill="currentColor"/></svg>
<svg class="ic" style="left:2790.0px;top:49.0px;width:48.0px;height:41.0px;color:#666;" viewBox="0 0 48 42" preserveAspectRatio="none"><path d="M24 2 C36.5 2 46 8.8 46 17.5 C46 26.2 36.5 33 24 33 C22 33 20.2 32.8 18.4 32.5 C15 35.8 10.5 38.6 5 40 C8 37 10 33.5 10.4 29.6 C5.2 26.8 2 22.4 2 17.5 C2 8.8 11.5 2 24 2Z" fill="none" stroke="currentColor" stroke-width="3.2" stroke-linejoin="round"/></svg>
</div>
<div class="row" style="top:976.0px">
<div class="abs" style="left:0;top:0;width:3062px;height:3px;background:#f5f5f6"></div>
<div class="cb" style="left:43px;top:50.5px"></div>
<svg class="ic" style="left:138.9px;top:54.8px;width:34.8px;height:34.4px;color:#702c20;" viewBox="0 0 35 34.5" preserveAspectRatio="none"><path d="M30.6 1.7 A9.6 9.6 0 1 0 34.8 9.35 A5.5 5.5 0 1 1 30.6 1.7Z" fill="currentColor"/>
<path d="M2.08 26.64 L17.58 12.34 L23.42 18.66 L7.92 32.96 A4.3 4.3 0 0 1 2.08 26.64Z M8.1 28.7 A1.75 1.75 0 1 0 4.6 28.7 A1.75 1.75 0 1 0 8.1 28.7Z" fill="currentColor" fill-rule="evenodd"/></svg>
<div class="cell link" style="left:140px;top:44.7px"><span style="display:inline-block;width:44.5px"></span>6427204 - Test<br>themes</div>
<div class="cell link" style="left:598.5px;top:44.7px">Building 2</div>
<div class="cell link" style="left:834px;top:44.7px">Heating-Cooling</div>
<div class="cell dt" style="left:1246px;top:44.7px">Tue, Sep 27,<br>2022,<br>9:08am</div>
<div class="cell dt" style="left:1492.6999999999998px;top:44.7px">Fri, Sep<br>30,<br>2022</div>
<div class="cell" style="left:1668px;top:44.7px">Pending<br>finalization</div>
<div class="cell link" style="left:1920.5px;top:44.7px"><span class="av">MB</span>Mary Berry</div>
<svg class="ic" style="left:2993.0px;top:49.0px;width:11.0px;height:37.0px;color:#666;" viewBox="0 0 11 37" preserveAspectRatio="none"><rect x="0" y="0" width="11" height="10" rx="2.8" fill="currentColor"/><rect x="0" y="13.5" width="11" height="10" rx="2.8" fill="currentColor"/><rect x="0" y="27" width="11" height="10" rx="2.8" fill="currentColor"/></svg>
<svg class="ic" style="left:2892.0px;top:46.8px;width:42.0px;height:41.0px;color:#666;" viewBox="0 0 42 42" preserveAspectRatio="none"><path d="M9.6 31 A16 16 0 1 0 10.5 10.5" fill="none" stroke="currentColor" stroke-width="6.4"/>
<path d="M0.6 2.6 V17.5 Q0.6 19 2.1 19 H17 Q19.6 18.8 17.9 16.9 L2.7 1.7 Q0.8 0 0.6 2.6Z" fill="currentColor"/></svg>
<svg class="ic" style="left:2790.0px;top:49.0px;width:48.0px;height:41.0px;color:#666;" viewBox="0 0 48 42" preserveAspectRatio="none"><path d="M24 2 C36.5 2 46 8.8 46 17.5 C46 26.2 36.5 33 24 33 C22 33 20.2 32.8 18.4 32.5 C15 35.8 10.5 38.6 5 40 C8 37 10 33.5 10.4 29.6 C5.2 26.8 2 22.4 2 17.5 C2 8.8 11.5 2 24 2Z" fill="none" stroke="currentColor" stroke-width="3.2" stroke-linejoin="round"/></svg>
<div class="t" style="left:2696.0px;top:33px;width:40px;text-align:center;font-size:58px;font-weight:700;color:#666;line-height:68px;transform:scaleX(.83)">$</div>
</div>
<div class="row alt" style="top:1224.0px">
<div class="abs" style="left:0;top:0;width:3062px;height:3px;background:#f5f5f6"></div>
<div class="cb" style="left:43px;top:50.5px"></div>
<svg class="ic" style="left:138.9px;top:54.8px;width:34.8px;height:34.4px;color:#702c20;" viewBox="0 0 35 34.5" preserveAspectRatio="none"><path d="M30.6 1.7 A9.6 9.6 0 1 0 34.8 9.35 A5.5 5.5 0 1 1 30.6 1.7Z" fill="currentColor"/>
<path d="M2.08 26.64 L17.58 12.34 L23.42 18.66 L7.92 32.96 A4.3 4.3 0 0 1 2.08 26.64Z M8.1 28.7 A1.75 1.75 0 1 0 4.6 28.7 A1.75 1.75 0 1 0 8.1 28.7Z" fill="currentColor" fill-rule="evenodd"/></svg>
<div class="cell link" style="left:140px;top:44.7px"><span style="display:inline-block;width:44.5px"></span>6427206 - Testy test</div>
<div class="cell link" style="left:598.5px;top:44.7px">Building 4</div>
<div class="cell link" style="left:834px;top:44.7px">Heating-Cooling</div>
<div class="cell dt" style="left:1246px;top:44.7px">Tue, Sep 27,<br>2022,<br>9:12am</div>
<div class="cell dt" style="left:1492.6999999999998px;top:44.7px">Wed,<br>Sep 28,<br>2022</div>
<div class="cell" style="left:1668px;top:44.7px">Pending<br>finalization</div>
<div class="cell" style="left:1920.5px;top:44.7px">-</div>
<svg class="ic" style="left:2993.0px;top:49.0px;width:11.0px;height:37.0px;color:#666;" viewBox="0 0 11 37" preserveAspectRatio="none"><rect x="0" y="0" width="11" height="10" rx="2.8" fill="currentColor"/><rect x="0" y="13.5" width="11" height="10" rx="2.8" fill="currentColor"/><rect x="0" y="27" width="11" height="10" rx="2.8" fill="currentColor"/></svg>
<svg class="ic" style="left:2892.0px;top:46.8px;width:42.0px;height:41.0px;color:#666;" viewBox="0 0 42 42" preserveAspectRatio="none"><path d="M9.6 31 A16 16 0 1 0 10.5 10.5" fill="none" stroke="currentColor" stroke-width="6.4"/>
<path d="M0.6 2.6 V17.5 Q0.6 19 2.1 19 H17 Q19.6 18.8 17.9 16.9 L2.7 1.7 Q0.8 0 0.6 2.6Z" fill="currentColor"/></svg>
<svg class="ic" style="left:2790.0px;top:49.0px;width:48.0px;height:41.0px;color:#666;" viewBox="0 0 48 42" preserveAspectRatio="none"><path d="M24 2 C36.5 2 46 8.8 46 17.5 C46 26.2 36.5 33 24 33 C22 33 20.2 32.8 18.4 32.5 C15 35.8 10.5 38.6 5 40 C8 37 10 33.5 10.4 29.6 C5.2 26.8 2 22.4 2 17.5 C2 8.8 11.5 2 24 2Z" fill="none" stroke="currentColor" stroke-width="3.2" stroke-linejoin="round"/></svg>
<div class="t" style="left:2696.0px;top:33px;width:40px;text-align:center;font-size:58px;font-weight:700;color:#666;line-height:68px;transform:scaleX(.83)">$</div>
</div>
<div class="row" style="top:1472.0px">
<div class="abs" style="left:0;top:0;width:3062px;height:3px;background:#f5f5f6"></div>
<div class="cb" style="left:43px;top:50.5px"></div>
<svg class="ic" style="left:138.9px;top:54.8px;width:34.8px;height:34.4px;color:#702c20;" viewBox="0 0 35 34.5" preserveAspectRatio="none"><path d="M30.6 1.7 A9.6 9.6 0 1 0 34.8 9.35 A5.5 5.5 0 1 1 30.6 1.7Z" fill="currentColor"/>
<path d="M2.08 26.64 L17.58 12.34 L23.42 18.66 L7.92 32.96 A4.3 4.3 0 0 1 2.08 26.64Z M8.1 28.7 A1.75 1.75 0 1 0 4.6 28.7 A1.75 1.75 0 1 0 8.1 28.7Z" fill="currentColor" fill-rule="evenodd"/></svg>
<div class="cell link" style="left:140px;top:44.7px"><span style="display:inline-block;width:44.5px"></span>6415945 - Paint over<br>graffiti in cafeteria</div>
<div class="cell link" style="left:598.5px;top:44.7px">Building 1</div>
<div class="cell link" style="left:834px;top:44.7px">Painting</div>
<div class="cell dt" style="left:1246px;top:44.7px">Wed, Aug<br>31, 2022,<br>11:14am</div>
<div class="cell dt" style="left:1492.6999999999998px;top:44.7px">Mon,<br>Sep 5,<br>2022</div>
<div class="cell" style="left:1668px;top:44.7px">Finalized</div>
<div class="cell link" style="left:1920.5px;top:44.7px"><span class="av">RF</span>Rebecca<br>Favorito</div>
<svg class="ic" style="left:2993.0px;top:49.0px;width:11.0px;height:37.0px;color:#666;" viewBox="0 0 11 37" preserveAspectRatio="none"><rect x="0" y="0" width="11" height="10" rx="2.8" fill="currentColor"/><rect x="0" y="13.5" width="11" height="10" rx="2.8" fill="currentColor"/><rect x="0" y="27" width="11" height="10" rx="2.8" fill="currentColor"/></svg>
<svg class="ic" style="left:2892.0px;top:46.8px;width:42.0px;height:41.0px;color:#666;" viewBox="0 0 42 42" preserveAspectRatio="none"><path d="M9.6 31 A16 16 0 1 0 10.5 10.5" fill="none" stroke="currentColor" stroke-width="6.4"/>
<path d="M0.6 2.6 V17.5 Q0.6 19 2.1 19 H17 Q19.6 18.8 17.9 16.9 L2.7 1.7 Q0.8 0 0.6 2.6Z" fill="currentColor"/></svg>
<svg class="ic" style="left:2790.0px;top:49.0px;width:48.0px;height:41.0px;color:#666;" viewBox="0 0 48 42" preserveAspectRatio="none"><path d="M24 2 C36.5 2 46 8.8 46 17.5 C46 26.2 36.5 33 24 33 C22 33 20.2 32.8 18.4 32.5 C15 35.8 10.5 38.6 5 40 C8 37 10 33.5 10.4 29.6 C5.2 26.8 2 22.4 2 17.5 C2 8.8 11.5 2 24 2Z" fill="none" stroke="currentColor" stroke-width="3.2" stroke-linejoin="round"/></svg>
</div>
<div class="row alt" style="top:1720.0px">
<div class="abs" style="left:0;top:0;width:3062px;height:3px;background:#f5f5f6"></div>
<div class="bar"></div>
<div class="cb" style="left:43px;top:50.5px"></div>
<svg class="ic" style="left:138.9px;top:54.8px;width:34.8px;height:34.4px;color:#702c20;" viewBox="0 0 35 34.5" preserveAspectRatio="none"><path d="M30.6 1.7 A9.6 9.6 0 1 0 34.8 9.35 A5.5 5.5 0 1 1 30.6 1.7Z" fill="currentColor"/>
<path d="M2.08 26.64 L17.58 12.34 L23.42 18.66 L7.92 32.96 A4.3 4.3 0 0 1 2.08 26.64Z M8.1 28.7 A1.75 1.75 0 1 0 4.6 28.7 A1.75 1.75 0 1 0 8.1 28.7Z" fill="currentColor" fill-rule="evenodd"/></svg>
<div class="cell link un" style="left:140px;top:44.7px"><span style="display:inline-block;width:44.5px"></span>6415944 - Outlet not<br>working</div>
<div class="cell link un" style="left:598.5px;top:44.7px">Cold<br>Storage</div>
<div class="cell link un" style="left:834px;top:44.7px">Electrical</div>
<div class="cell dt un" style="left:1246px;top:44.7px">Wed, Aug<br>31, 2022,<br>11:13am</div>
<div class="cell dt un" style="left:1492.6999999999998px;top:44.7px">Wed,<br>Aug 31,<br>2022</div>
<div class="cell un" style="left:1668px;top:44.7px">Pending<br>assignment</div>
<div class="cell un" style="left:1920.5px;top:44.7px">-</div>
<svg class="ic" style="left:2993.0px;top:49.0px;width:11.0px;height:37.0px;color:#666;" viewBox="0 0 11 37" preserveAspectRatio="none"><rect x="0" y="0" width="11" height="10" rx="2.8" fill="currentColor"/><rect x="0" y="13.5" width="11" height="10" rx="2.8" fill="currentColor"/><rect x="0" y="27" width="11" height="10" rx="2.8" fill="currentColor"/></svg>
<svg class="ic" style="left:2892.5px;top:48.0px;width:49.0px;height:38.0px;color:#666;" viewBox="0 0 49 38" preserveAspectRatio="none"><path d="M27 3 H8 Q2 3 2 9 V30 Q2 36 8 36 H29 Q35 36 35 30 V26" fill="none" stroke="currentColor" stroke-width="3.8" stroke-linecap="round"/>
<path d="M16.5 30 L18.6 21.4 L37 3 L45 11 L26.4 29.4 L17.8 31.3 Q16.2 31.6 16.5 30Z M19.6 26 L20.4 27.6 L22.2 28 L23.2 26.6 L21.4 24.6Z" fill="currentColor" fill-rule="evenodd"/>
<path d="M38.4 1.6 L40 0.6 Q41.5 -0.4 43 0.9 L47.6 5.4 Q48.9 6.8 47.8 8.4 L46.4 9.6Z" fill="currentColor"/>
<path d="M23.4 24 L39 8.4" stroke="#fff" stroke-width="1" opacity=".5"/></svg>
<svg class="ic" style="left:2793.5px;top:42.0px;width:41.0px;height:48.0px;color:#666;" viewBox="0 0 41 48" preserveAspectRatio="none"><path d="M1 2 H40 M1 46 H40" stroke="currentColor" stroke-width="3.6" stroke-linecap="round"/>
<path d="M6 3 C6 13 11 19 17 24 C11 29 6 35 6 45 M35 3 C35 13 30 19 24 24 C30 29 35 35 35 45" fill="none" stroke="currentColor" stroke-width="3.4"/>
<path d="M7.3 8 H33.7 C32.6 14.5 28.5 19.5 23.5 23 Q20.5 25 17.5 23 C12.5 19.5 8.4 14.5 7.3 8Z" fill="currentColor"/></svg>
<svg class="ic" style="left:2691.5px;top:49.0px;width:48.0px;height:41.0px;color:#666;" viewBox="0 0 48 42" preserveAspectRatio="none"><path d="M24 2 C36.5 2 46 8.8 46 17.5 C46 26.2 36.5 33 24 33 C22 33 20.2 32.8 18.4 32.5 C15 35.8 10.5 38.6 5 40 C8 37 10 33.5 10.4 29.6 C5.2 26.8 2 22.4 2 17.5 C2 8.8 11.5 2 24 2Z" fill="none" stroke="currentColor" stroke-width="3.2" stroke-linejoin="round"/></svg>
<svg class="ic" style="left:2594.0px;top:42.5px;width:46.0px;height:46.0px;color:#666;" viewBox="0 0 46 46" preserveAspectRatio="none"><circle cx="23" cy="23" r="20.8" fill="none" stroke="currentColor" stroke-width="4.2"/>
<g transform="translate(23 23.5) scale(1.17) translate(-22 -23)">
<path d="M17.5 24 V14 Q17.5 12 19.3 12 Q21 12 21 14 V11.5 Q21 9.5 22.8 9.5 Q24.6 9.5 24.6 11.5 V13 Q24.6 11.2 26.4 11.2 Q28.2 11.2 28.2 13 V16 Q28.2 14.2 30 14.2 Q31.8 14.2 31.8 16 V28 C31.8 33.5 28.5 36 24 36 C20 36 17.5 34.5 15.5 31 L11.6 24.6 Q10.8 23 12.2 22.2 Q13.6 21.6 14.8 23 L17.5 26.4Z" fill="none" stroke="currentColor" stroke-width="2.1" stroke-linejoin="round"/>
<path d="M21 14 V21 M24.6 13 V21 M28.2 16 V21" stroke="currentColor" stroke-width="1.5" opacity=".45"/>
</g></svg>
<svg class="ic" style="left:2500.5px;top:46.5px;width:35.0px;height:41.0px;color:#666;" viewBox="0 0 38 46" preserveAspectRatio="none"><circle cx="19" cy="12" r="12" fill="currentColor"/>
<path d="M8 21.5 C11 24.5 15 26 19 26 C23 26 27 24.5 30 21.5 C35.5 22.5 38 28 38 35 V39 Q38 46 31 46 H7 Q0 46 0 39 V35 C0 28 2.5 22.5 8 21.5Z" fill="currentColor"/></svg>
</div>
<div class="abs" style="left:692px;top:1968px;width:3148px;height:139px;background:#fff"></div>
<div class="abs" style="left:778px;top:1968px;width:3062px;height:3px;background:#f5f5f6"></div>
<div class="t " style="left:779.5px;top:2023.3px;font-size:37.5px;color:#35353b;letter-spacing:0.07px;">Showing 1–20 of 42 records</div>
<div class="t " style="left:2092.5px;top:2021.3px;font-size:37.5px;color:#35353b;letter-spacing:-0.37px;">Show records</div>
<div class="abs" style="left:2330px;top:2006.5px;width:159px;height:73px;border-radius:18px;border:2.5px solid #7a7a7a;background:#fff"></div>
<div class="t " style="left:2347px;top:2024.5px;font-size:36px;color:#35353b;">20</div>
<svg class="ic" style="left:2434.5px;top:2036.5px;width:25.0px;height:13.0px;color:#555;" viewBox="0 0 24 13" preserveAspectRatio="none"><path d="M1.5 0 H22.5 Q24.5 0.3 23.3 2 L13 12.4 Q12 13.3 11 12.4 L0.7 2 Q-0.5 0.3 1.5 0Z" fill="currentColor"/></svg>
<svg class="ic" style="left:3360.0px;top:2022.5px;width:28.0px;height:43.0px;color:#8e9494;" viewBox="0 0 28 43" preserveAspectRatio="none"><path d="M22 2 L26.5 6.5 L11.5 21.5 L26.5 36.5 L22 41 L2.5 21.5Z" fill="currentColor" stroke="currentColor" stroke-width="2" stroke-linejoin="round"/></svg>
<div class="t " style="left:3433.5px;top:2021.3px;font-size:37.5px;color:#35353b;letter-spacing:-0.74px;">Page</div>
<div class="abs" style="left:3527px;top:2006.5px;width:104px;height:73px;border-radius:22px;border:2.5px solid #8e8e8e;background:#fff;box-shadow:inset 0 2px 5px rgba(0,0,0,.1)"></div>
<div class="t " style="left:3546px;top:2023.8px;font-size:38px;color:#35353b;">1</div>
<div class="t " style="left:3640px;top:2021.3px;font-size:37.5px;color:#35353b;letter-spacing:0.40px;">of 3</div>
<svg class="ic" style="left:3749.0px;top:2022.5px;width:28.0px;height:43.0px;color:#666;" viewBox="0 0 28 43" preserveAspectRatio="none"><path d="M6 2 L1.5 6.5 L16.5 21.5 L1.5 36.5 L6 41 L25.5 21.5Z" fill="currentColor" stroke="currentColor" stroke-width="2" stroke-linejoin="round"/></svg>
</div>
<script>(function(){var a=document.getElementById("app"),w=window.innerWidth||3840,s=w/3840;if(a&&Math.abs(s-1)>0.002){a.style.transform="scale("+s+")";}})();</script>
</body></html>
